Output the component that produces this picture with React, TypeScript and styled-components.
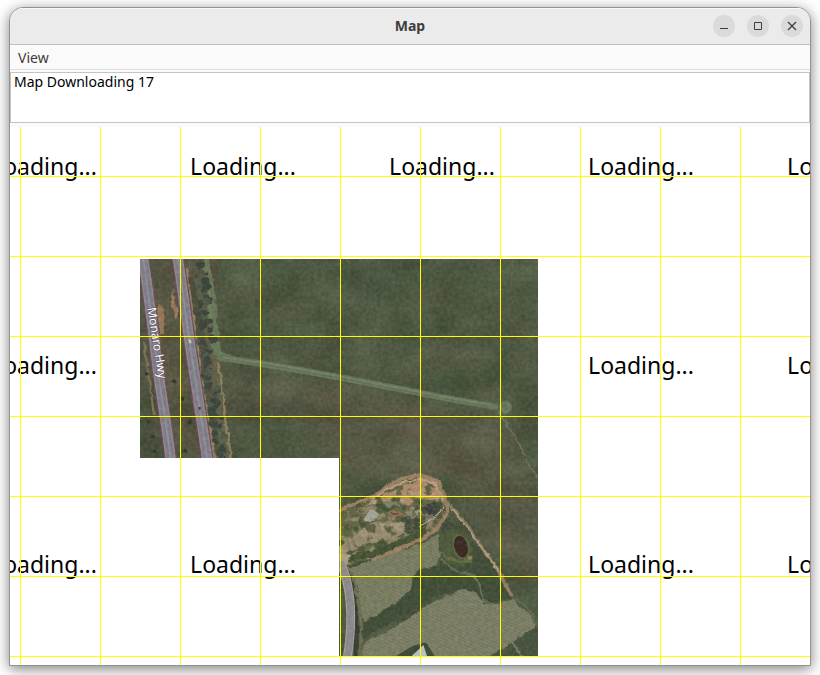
import React from "react";
import styled, { createGlobalStyle } from "styled-components";

const GlobalStyle = createGlobalStyle`
  * { box-sizing: border-box; }
  body {
    margin: 0;
    background: #fff;
    font-family: "Noto Sans", "Open Sans", sans-serif;
  }
`;

const TILE = 199;

const Desktop = styled.div`
  display: flex;
  min-height: 100vh;
  padding: 7px 9px 9px;
  overflow: hidden;
`;

const Window = styled.main`
  display: flex;
  flex-direction: column;
  flex: 1;
  min-width: 0;
  overflow: hidden;
  border: 1px solid #929292;
  border-radius: 14px 14px 0 0;
  background: #fafafa;
  box-shadow: 0 3px 14px rgba(0, 0, 0, 0.5);
`;

const TitleBar = styled.header`
  display: grid;
  grid-template-columns: 1fr auto 1fr;
  align-items: center;
  height: 37px;
  padding: 0 7px;
  border-bottom: 1px solid #bfbfbf;
  background: #ebebeb;
  box-shadow: inset 0 1px #f9f9f9;
`;

const Title = styled.h1`
  grid-column: 2;
  margin: 0;
  color: #3d3d3d;
  font-size: 14px;
  font-weight: 700;
  line-height: 20px;
`;

const Controls = styled.div`
  display: flex;
  justify-content: flex-end;
  gap: 12px;
`;

const ControlButton = styled.button`
  display: grid;
  place-items: center;
  width: 22px;
  height: 22px;
  padding: 0;
  border: 0;
  border-radius: 50%;
  background: #dadada;
  color: #3d3d3d;
`;

const MenuBar = styled.nav`
  display: flex;
  height: 25px;
  padding: 0 8px;
  border-bottom: 1px solid #dedede;
`;

const MenuButton = styled.button`
  padding: 0;
  border: 0;
  background: none;
  color: #3d3d3d;
  font: inherit;
  font-size: 14px;
  line-height: 26px;
`;

const StatusLog = styled.textarea`
  display: block;
  width: 100%;
  height: 51px;
  margin: 2px 0 4px;
  padding: 0 3px;
  border: 1px solid #c4c4c4;
  border-radius: 0;
  outline: 0;
  resize: none;
  background: #fff;
  color: #000;
  font: inherit;
  font-size: 14px;
  line-height: 18px;
`;

const MapView = styled.section`
  position: relative;
  flex: 1;
  overflow: hidden;
  background: #fff;
`;

const TileGrid = styled.div`
  display: grid;
  grid-template-columns: repeat(5, ${TILE}px);
  grid-template-rows: repeat(3, ${TILE}px);
  margin: -67px 0 0 -69px;
`;

const LoadingTile = styled.div<{ $column: number; $row: number }>`
  grid-column: ${(p) => p.$column};
  grid-row: ${(p) => p.$row};
  display: grid;
  place-items: center;
  padding: 12px 0 0 7px;
  color: #000;
  font-size: 23px;
  line-height: 30px;
  z-index: 1;
`;

const Imagery = styled.svg`
  grid-area: 2 / 2 / 4 / 4;
  display: block;
  width: 100%;
  height: 100%;

  filter {
    color-interpolation-filters: sRGB;
  }
`;

const GridLines = styled.div`
  position: absolute;
  inset: 0;
  z-index: 2;
  pointer-events: none;
  background-image: linear-gradient(to right, #ff0 1px, transparent 1px),
    linear-gradient(to bottom, #ff0 1px, transparent 1px);
  background-size: 80px 80px;
  background-position: 10px 49px;
`;

const loading: [number, number][] = [
  [1, 1], [2, 1], [3, 1], [4, 1], [5, 1],
  [1, 2], [4, 2], [5, 2],
  [1, 3], [2, 3], [4, 3], [5, 3],
];

const noise = (n: number) => {
  const v = Math.sin(n * 127.1 + 11.7) * 43758.5453;
  return v - Math.floor(v);
};

const trees = Array.from({ length: 78 }, (_, i) => {
  const y = 14 + i * 8;
  const centre = y < 250 ? 166 + y * 0.13 : 186 + (y - 250) * 0.17;
  return { x: centre + noise(i) * 40 - 14, y: y + noise(i + 90) * 10, r: 5 + noise(i + 200) * 9 };
});

const shrubs = [
  [24, 500], [38, 545], [44, 590], [103, 378], [132, 590], [150, 500], [20, 358], [128, 432],
];

const roads = {
  west: "M8 0 C22 90 34 180 48 300 S80 500 94 630",
  east: "M112 0 C126 90 136 170 148 254 S180 460 204 630",
};

const quarry = "M0 166 L100 122 L190 72 L250 56 L300 72 L322 110 L326 158 Q312 200 270 236 Q200 280 110 308 L20 334 L0 320Z";
const upperField = "M38 340L130 306L250 266L300 236L306 300L296 330L248 340L224 366L220 400L180 440L80 498L66 470L58 400Z";
const lowerField = "M80 562L170 516L280 444L380 402L412 412L440 446L475 448L526 432L594 500L586 526L525 562L440 620H66Z";

function Aerial() {
  return (
    <Imagery viewBox="0 0 1194 1194" role="img" aria-label="Aerial imagery along Monaro Hwy">
      <defs>
        <clipPath id="loaded"><path d="M0 0H1194V1194H597V597H0Z" /></clipPath>
        <clipPath id="quarry"><path d={quarry} /></clipPath>
        <filter id="soft" x="-30%" y="-30%" width="160%" height="160%"><feGaussianBlur stdDeviation="28" /></filter>
        <filter id="edge" x="-10%" y="-10%" width="120%" height="120%">
          <feTurbulence type="fractalNoise" baseFrequency=".045" numOctaves="3" seed="4" result="n" />
          <feDisplacementMap in="SourceGraphic" in2="n" scale="14" xChannelSelector="R" yChannelSelector="G" />
          <feGaussianBlur stdDeviation="1.5" />
        </filter>
        <filter id="grain" x="0" y="0" width="100%" height="100%">
          <feTurbulence type="fractalNoise" baseFrequency=".09" numOctaves="4" seed="8" />
          <feColorMatrix values="1 .2 0 0 -.18  1 0 0 0 -.1  1 0 .1 0 -.18  0 0 0 0 1" />
        </filter>
        <filter id="patches" x="0" y="0" width="100%" height="100%">
          <feTurbulence type="fractalNoise" baseFrequency=".008 .012" numOctaves="5" seed="17" />
          <feColorMatrix values=".9 .4 0 0 -.33  .9 0 0 0 -.09  .8 .1 0 0 -.18  0 0 0 0 1" />
        </filter>
        <filter id="scrub" x="0" y="0" width="100%" height="100%">
          <feTurbulence type="fractalNoise" baseFrequency=".035" numOctaves="4" seed="31" />
          <feColorMatrix values="0 0 0 0 .25  0 0 0 0 .31  0 0 0 0 .19  7 0 0 0 -3.7" />
        </filter>
        <filter id="rubble" x="0" y="0" width="100%" height="100%">
          <feTurbulence type="fractalNoise" baseFrequency=".035 .045" numOctaves="4" seed="12" />
          <feColorMatrix values="0 0 0 0 .76  0 0 0 0 .67  0 0 0 0 .56  0 7 0 0 -3.4" />
        </filter>
        <pattern id="furrows" width="12" height="9" patternUnits="userSpaceOnUse" patternTransform="rotate(24)">
          <path d="M0 2H12" stroke="#a5a586" strokeWidth="2" opacity=".3" />
          <path d="M0 6H12" stroke="#4d5639" strokeWidth="2" opacity=".2" />
        </pattern>
      </defs>

      <g clipPath="url(#loaded)">
        <path fill="#4d5740" d="M0 0H1194V1194H0Z" />
        <g filter="url(#soft)">
          <path fill="#5a5946" d="M270 330L600 400L1080 480L1194 840V1010L930 640L600 640L500 480L270 440Z" />
          <path fill="#41543f" d="M620 90Q730 20 890 0L760 80L610 140Z" />
          <path fill="#54513e" d="M0 0H200L260 600H0Z" />
          <path fill="#3f4a35" d="M0 330L50 420L90 600H0Z" />
        </g>

        <path d="M0 0H1194V1194H0Z" filter="url(#patches)" opacity=".16" />

        <g transform="translate(0 -12)">
          <g filter="url(#edge)">
            <path d="M54 150L68 155L72 240L60 235Z" fill="#9a7a57" />
            <path d="M99 100L116 185L108 190L94 150Z" fill="#a07e5a" />
            <path d="M139 40Q149 130 160 200T184 370T226 620" fill="none" stroke="#948361" strokeWidth="10" />
            <path d="M12 260L24 350L42 480" fill="none" stroke="#7d7455" strokeWidth="6" />
            <path d="M176 60L200 180L220 290L238 420L260 620" fill="none" stroke="#6d6b50" strokeWidth="30" opacity=".6" />
            <path d="M196 0L212 120Q218 210 230 286Q232 306 270 310" fill="none" stroke="#697a5a" strokeWidth="25" />
            <path d="M190 0L208 130L220 260" fill="none" stroke="#7c8662" strokeWidth="4" />
            <path d="M222 0Q216 50 238 100" fill="none" stroke="#5a5040" strokeWidth="14" opacity=".7" />
            <path d="M234 320L244 380L254 470L276 620" fill="none" stroke="#91845f" strokeWidth="7" />
            <path d="M270 316L286 318" stroke="#aaa076" strokeWidth="5" />
            {trees.map((t, i) => (
              <ellipse key={i} cx={t.x} cy={t.y} rx={t.r} ry={t.r * 0.8} fill={i % 3 ? "#3a443b" : "#4e5b4a"} />
            ))}
            {shrubs.map(([x, y]) => (
              <circle key={`${x}-${y}`} cx={x} cy={y} r="6" fill="#2d372a" />
            ))}
          </g>
          {Object.values(roads).map((d) => (
            <g key={d} fill="none">
              <path d={d} stroke="#6b4c5a" strokeWidth="38" />
              <path d={d} stroke="#9a8a96" strokeWidth="31" />
              <path d={d} stroke="#82808c" strokeWidth="23" />
              <path d={d} stroke="#9593a0" strokeWidth="5" />
            </g>
          ))}
          <path d="M148 254L152 264" stroke="#d3d3d8" strokeWidth="7" />
          <path d="M179 456V464" stroke="#3b3945" strokeWidth="6" />
        </g>

        <g transform="translate(594 -12)" fill="none">
          <path d="M-350 308L-180 334L0 366L170 399L350 434L480 456" stroke="#64745a" strokeWidth="20" />
          <path d="M-350 306L-180 330L0 363L170 396L350 431L480 453" stroke="#768466" strokeWidth="6" />
          <path d="M-350 313L-180 341L0 373L170 406L350 440L480 460" stroke="#6f7d60" strokeWidth="3" />
          <circle cx="502" cy="457" r="20" fill="#66765a" />
          <circle cx="502" cy="457" r="12" stroke="#7a8768" strokeWidth="3" />
          <path d="M476 460L500 500L530 545L560 600" stroke="#747260" strokeWidth="5" filter="url(#edge)" />
          <path d="M420 360L480 455" stroke="#5c5b49" strokeWidth="4" opacity=".6" />
        </g>

        <g transform="translate(594 588)">
          <g filter="url(#edge)">
            <path d="M560 10L606 80" stroke="#777462" strokeWidth="5" />
            <path d="M310 180L450 300L490 370L520 430L440 445L380 405L290 425L60 560L80 500L180 440L230 350L306 330Z" fill="#3e4d36" />
            <path d={upperField} fill="#7a7f62" />
            <path d={lowerField} fill="#7c8066" />
            <path d="M525 562L594 510L620 606H450Z" fill="#45533d" />
            <path d="M300 250Q330 210 365 225Q410 250 404 305L370 340L320 320Z" fill="#4d5a3a" />
            <path d="M304 290Q340 330 400 316" fill="none" stroke="#646d44" strokeWidth="9" />
          </g>
          <path d={upperField} fill="url(#furrows)" />
          <path d={lowerField} fill="url(#furrows)" />

          <path d={quarry} fill="#626646" filter="url(#edge)" />
          <g clipPath="url(#quarry)">
            <path d="M80 150L250 62L315 90L300 132L250 135L210 150L175 128L120 146Z" fill="#b48f6e" filter="url(#edge)" />
            <path d="M0 280L60 235L100 200L150 210L180 195L220 220L170 250L90 265L0 310Z" fill="#988d70" filter="url(#edge)" />
            <path d="M80 180L100 166L126 176L106 196L70 202Z" fill="#a9aca2" filter="url(#edge)" />
            <g filter="url(#edge)">
              <path d="M130 140L170 130L190 152L150 172L126 164Z" fill="#46593a" />
              <path d="M190 190L240 176L250 150L300 140L310 170L270 210L205 240Z" fill="#3f493c" opacity=".85" />
              <path d="M264 156L296 142L300 164L278 188Z" fill="#393948" />
              <path d="M226 172L250 164L262 180L246 194Z" fill="#a2a48f" />
            </g>
            <path d="M0 40H340V350H0Z" filter="url(#rubble)" opacity=".5" />
            <path d="M0 40H340V350H0Z" filter="url(#scrub)" opacity=".75" />
            <g filter="url(#edge)">
              <path d="M150 174Q172 160 194 178Q180 192 150 174" fill="#435657" stroke="#a66f50" strokeWidth="6" />
              <path d="M20 312L110 294L200 258L266 226" stroke="#3d4f2f" strokeWidth="20" fill="none" opacity=".85" />
              <path d="M244 216L288 188L318 158" stroke="#b1a58f" strokeWidth="4" fill="none" />
            </g>
          </g>
          <g fill="none" filter="url(#edge)">
            <path d="M0 166L100 126L190 70L250 60L300 80L320 130L330 164Q310 220 250 252Q180 286 100 314" stroke="#a08364" strokeWidth="11" />
            <path d="M100 130L190 82L248 72L292 88L314 136" stroke="#c5a486" strokeWidth="6" />
            <path d="M318 134L342 156L390 214L430 275L482 350L522 426" stroke="#938064" strokeWidth="10" />
            <path d="M344 160L430 275L482 350" stroke="#bba786" strokeWidth="4" />
            <path d="M310 310Q350 356 394 356Q434 380 438 438L462 448" stroke="#66705a" strokeWidth="6" />
            <path d="M530 430Q580 458 596 510" stroke="#68704f" strokeWidth="5" />
            <path d="M524 564L552 604" stroke="#83816a" strokeWidth="5" />
            <path d="M30 334Q60 400 70 510L66 606" stroke="#6b6f52" strokeWidth="9" />
            <path d="M20 330Q60 430 54 606" stroke="#333d2e" strokeWidth="14" />
          </g>
          <ellipse cx="369" cy="275" rx="25" ry="38" fill="#5e6646" transform="rotate(-18 369 275)" />
          <ellipse cx="369" cy="275" rx="20" ry="33" fill="#38271f" transform="rotate(-14 369 275)" />
          <path d="M390 312L402 306" stroke="#9b815e" strokeWidth="10" />
          <path d="M0 292L40 300L25 330L10 350Z" fill="#b5a58e" filter="url(#edge)" />
          <path d="M6 320Q58 430 26 620" fill="none" stroke="#aaa59c" strokeWidth="27" />
          <path d="M6 320Q58 430 26 620" fill="none" stroke="#8f8f94" strokeWidth="20" />
          <path d="M170 606L222 574L264 562L292 606Z" fill="#3b4936" />
          <path d="M218 606L256 570L268 606Z" fill="#c3cbcd" />
        </g>

        <path d="M0 0H1194V1194H0Z" filter="url(#grain)" opacity=".1" />
        <text
          transform="translate(22 147) rotate(81)"
          fill="#fff"
          stroke="#635564"
          strokeWidth="4"
          paintOrder="stroke"
          fontFamily="Noto Sans, sans-serif"
          fontSize="36"
        >
          Monaro Hwy
        </text>
      </g>
    </Imagery>
  );
}

export default function App() {
  return (
    <>
      <GlobalStyle />
      <Desktop>
        <Window>
          <TitleBar>
            <Title>Map</Title>
            <Controls>
              <ControlButton aria-label="Minimize">
                <svg width="10" height="10"><path d="M1 7h8v1H1z" fill="currentColor" /></svg>
              </ControlButton>
              <ControlButton aria-label="Maximize">
                <svg width="10" height="10"><path d="M1.5 1.5h7v7h-7z" fill="none" stroke="currentColor" /></svg>
              </ControlButton>
              <ControlButton aria-label="Close">
                <svg width="10" height="10"><path d="M1 1l8 8M9 1L1 9" stroke="currentColor" strokeWidth="1.3" /></svg>
              </ControlButton>
            </Controls>
          </TitleBar>
          <MenuBar>
            <MenuButton>View</MenuButton>
          </MenuBar>
          <StatusLog aria-label="Status" readOnly value="Map Downloading 17" />
          <MapView aria-label="Map">
            <TileGrid>
              <Aerial />
              {loading.map(([column, row]) => (
                <LoadingTile key={`${column}-${row}`} $column={column} $row={row}>
                  Loading...
                </LoadingTile>
              ))}
            </TileGrid>
            <GridLines />
          </MapView>
        </Window>
      </Desktop>
    </>
  );
}
